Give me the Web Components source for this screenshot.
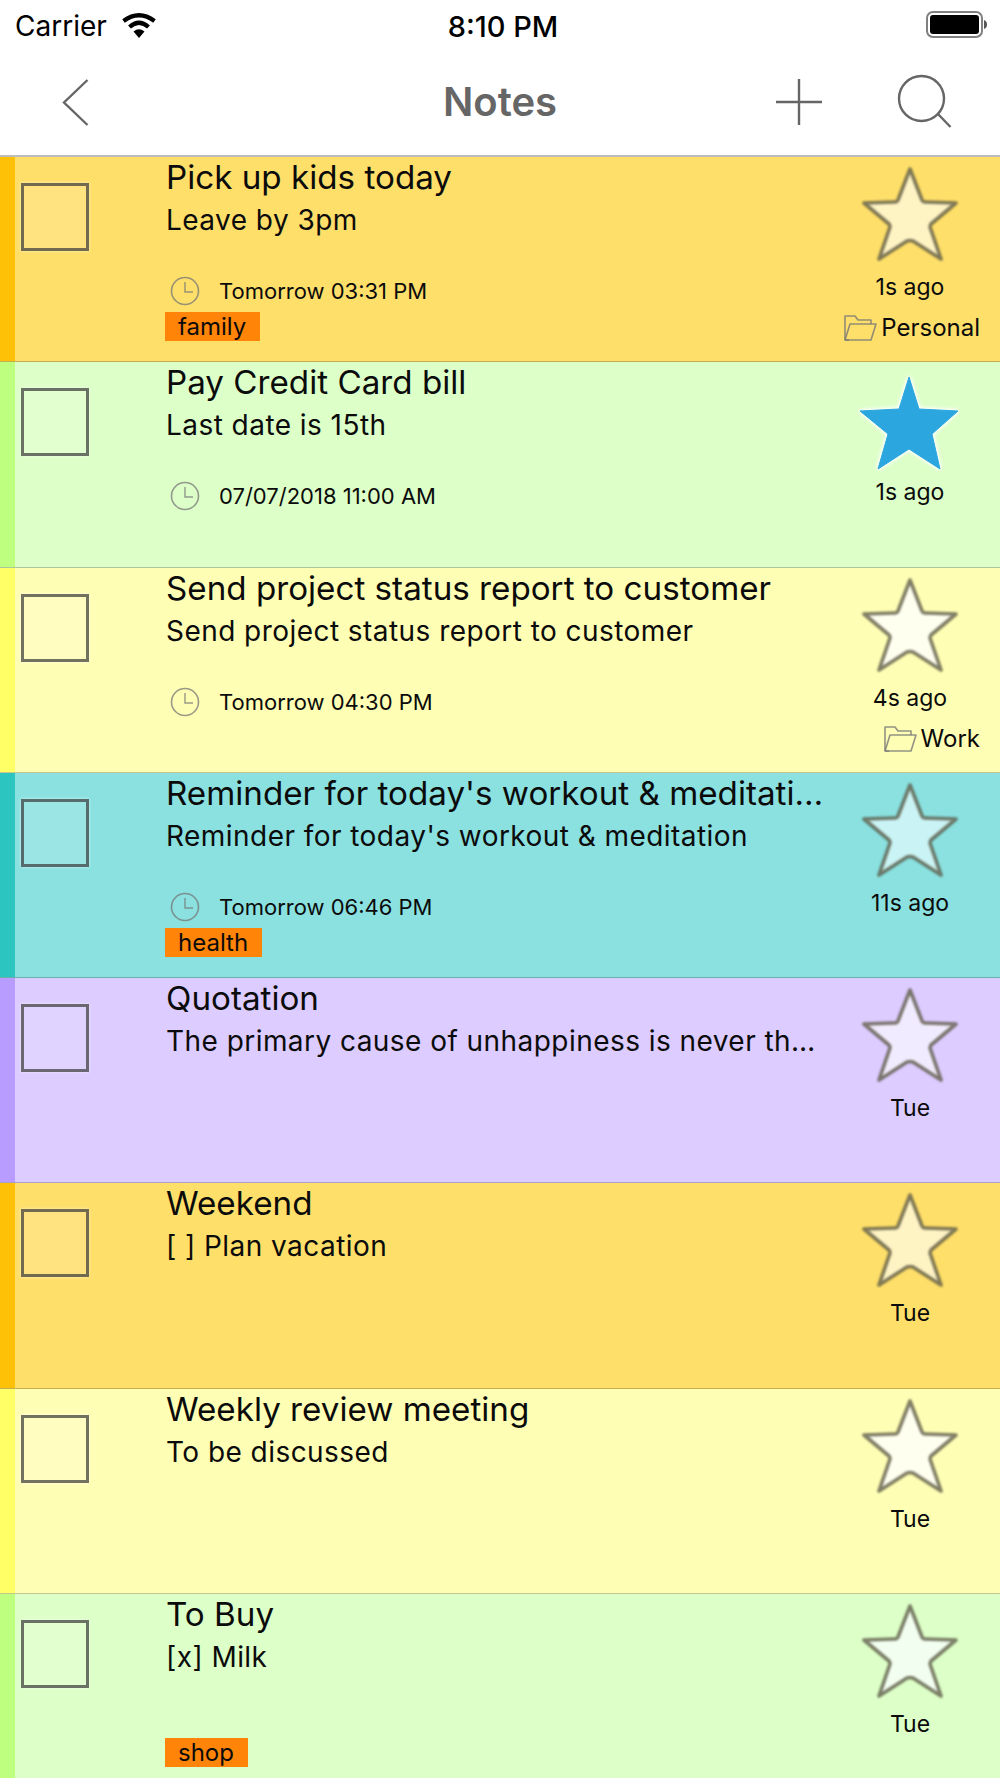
<!DOCTYPE html>
<html>
<head>
<meta charset="utf-8">
<title>Notes</title>
<style>
  html, body { margin: 0; padding: 0; background: #fff; }
  body { width: 1000px; height: 1778px; overflow: hidden; font-family: Inter, "Noto Sans", sans-serif; color: #0b0b0b; }
</style>
</head>
<body>
<status-bar></status-bar>
<nav-bar>Notes</nav-bar>
<note-list>
  <note-row color="orange" ago="1s ago" date="Tomorrow 03:31 PM" tag="family" folder="Personal" title-text="Pick up kids today" desc="Leave by 3pm"></note-row>
  <note-row color="green" ago="1s ago" date="07/07/2018 11:00 AM" starred title-text="Pay Credit Card bill" desc="Last date is 15th"></note-row>
  <note-row color="yellow" ago="4s ago" date="Tomorrow 04:30 PM" folder="Work" title-text="Send project status report to customer" desc="Send project status report to customer"></note-row>
  <note-row color="teal" ago="11s ago" date="Tomorrow 06:46 PM" tag="health" title-text="Reminder for today's workout &amp; meditation" desc="Reminder for today's workout &amp; meditation"></note-row>
  <note-row color="purple" ago="Tue" title-text="Quotation" desc="The primary cause of unhappiness is never the situation but your thoughts about it"></note-row>
  <note-row color="orange" ago="Tue" title-text="Weekend" desc="[ ] Plan vacation"></note-row>
  <note-row color="yellow" ago="Tue" title-text="Weekly review meeting" desc="To be discussed"></note-row>
  <note-row color="green" ago="Tue" tag="shop" title-text="To Buy" desc="[x] Milk"></note-row>
</note-list>

<script>
class StatusBar extends HTMLElement {
    constructor() {
        super();
        this.attachShadow({ mode: 'open' });
        this.shadowRoot.innerHTML = `
        <style>
            :host { display: grid; grid-template-columns: 1fr auto 1fr; align-items: center; height: 52px; padding: 0 12px 0 15px; font-size: 28px; color: #000; }
            .left { display: flex; align-items: center; gap: 14px; }
            .time { font-size: 29px; font-weight: 500; margin-left: 3px; }
            .right { display: flex; justify-content: flex-end; margin-top: -4px; }
        </style>
        <div class="left">
            <span>Carrier</span>
            <svg width="36" height="26" viewBox="0 0 36 26">
                <path d="M18 25 L12.5 18.5 Q18 14 23.5 18.5 Z" fill="#000"/>
                <path d="M8.5 14 Q18 5.5 27.5 14" fill="none" stroke="#000" stroke-width="4.2"/>
                <path d="M2.5 8 Q18 -3.5 33.5 8" fill="none" stroke="#000" stroke-width="4.2"/>
            </svg>
        </div>
        <span class="time">8:10 PM</span>
        <div class="right">
            <svg width="64" height="30" viewBox="0 0 64 30">
                <rect x="3" y="3" width="55" height="25" rx="6" fill="none" stroke="#808080" stroke-width="2"/>
                <rect x="6" y="6" width="49" height="19" rx="3" fill="#000"/>
                <path d="M60 11 Q63 12 63 15.5 Q63 19 60 20 Z" fill="#555"/>
            </svg>
        </div>
        `;
    }
}
customElements.define('status-bar', StatusBar);

class NavBar extends HTMLElement {
    constructor() {
        super();
        this.attachShadow({ mode: 'open' });
        this.shadowRoot.innerHTML = `
        <style>
            :host { display: grid; grid-template-columns: 1fr auto 1fr; align-items: center; height: 105px; box-sizing: border-box; padding-bottom: 4px; border-bottom: 2px solid #bdbdbd; color: #666; }
            .title { font-size: 40px; font-weight: 600; }
            .back { padding-left: 60px; display: flex; }
            .actions { display: flex; justify-content: flex-end; align-items: center; gap: 74px; padding-right: 47px; }
            svg { display: block; }
            path, circle { fill: none; stroke: #666; stroke-width: 2.4; }
        </style>
        <div class="back">
            <svg width="30" height="50" viewBox="0 0 30 50"><path d="M27.5 3 L4 25.5 L27.5 48"/></svg>
        </div>
        <div class="title"><slot></slot></div>
        <div class="actions">
            <svg width="48" height="48" viewBox="0 0 48 48"><path d="M24 1 V47 M1 24 H47"/></svg>
            <svg width="56" height="56" viewBox="0 0 56 56"><circle cx="24.5" cy="24.5" r="22.5"/><path d="M41 40 L53.5 53"/></svg>
        </div>
        `;
    }
}
customElements.define('nav-bar', NavBar);

class NoteList extends HTMLElement {
    constructor() {
        super();
        this.attachShadow({ mode: 'open' });
        this.shadowRoot.innerHTML = `
        <style>
            :host { display: flex; flex-direction: column; }
        </style>
        <slot></slot>
        `;
    }
}
customElements.define('note-list', NoteList);

const NOTE_COLORS = {
    orange: ['#fedf6a', '#ffc107', '#fef3c3'],
    green: ['#ddffc8', '#bfff80', '#f2fff0'],
    yellow: ['#fffeb5', '#ffff66', '#fffff0'],
    teal: ['#8ae1e0', '#2cc5c0', '#c9f3f4'],
    purple: ['#dcccff', '#b99cff', '#f1ebff']
};

const STAR_OUTLINE = 'M52 5 L64 36 Q65 38 67 38 L98 39 L73 60 Q72 62 72 63 L83 95 L55 77 Q52 76 49 77 L21 95 L32 63 Q32 61 31 60 L6 39 L37 38 Q39 38 40 36 Z';
const STAR_FILLED = 'M51 8 L61 40 L100 42 L74 65 L82 100 L51 80 L20 100 L30 65 L2 42 L41 40 Z';

class NoteRow extends HTMLElement {
    constructor() {
        super();
        this.attachShadow({ mode: 'open' });
    }

    connectedCallback() {
        const c = NOTE_COLORS[this.getAttribute('color')];
        const starred = this.hasAttribute('starred');
        const date = this.getAttribute('date');
        const tag = this.getAttribute('tag');
        const folder = this.getAttribute('folder');

        const star = starred
            ? `<path d="${STAR_FILLED}" fill="#2ba6df" stroke="#2ba6df" stroke-width="1" stroke-linejoin="round" style="filter: blur(.5px) drop-shadow(0 0 2px #fff) drop-shadow(0 0 1px #fff)"/>`
            : `<path d="${STAR_OUTLINE}" fill="${c[2]}" stroke="#55533f" stroke-opacity=".75" stroke-width="3.6" stroke-linejoin="round" style="filter: blur(1px)"/>`;

        this.shadowRoot.innerHTML = `
        <style>
            :host { display: flex; height: 205.3px; box-sizing: border-box; position: relative; background: ${c[0]}; border-bottom: 1px solid rgba(0,0,0,.22); overflow: hidden; flex: none; }
            :host::after { content: ""; position: absolute; left: 15px; bottom: -1px; width: 33px; height: 1px; background: rgba(255,255,255,.6); }
            .stripe { width: 15px; flex: none; background: ${c[1]}; }
            .check { width: 151px; flex: none; padding: 26px 0 0 6px; box-sizing: border-box; }
            .box { width: 68px; height: 68px; box-sizing: border-box; border: 3px solid rgba(60,60,60,.72); background: rgba(255,255,255,.15); box-shadow: 0 0 3px rgba(255,255,255,.6); }
            .main { width: 664px; margin-right: -8px; flex: none; min-width: 0; }
            .ttl, .desc { white-space: nowrap; overflow: hidden; text-overflow: ellipsis; }
            .ttl { font-size: 33.2px; line-height: 41px; }
            .desc { width: 654px; font-size: 28px; letter-spacing: .45px; line-height: 33px; margin-top: 6px; }
            .when { display: flex; align-items: center; gap: 19px; height: 32px; margin-top: 38px; padding-left: 4px; font-size: 22px; }
            .when.empty { height: 21px; }
            .tag { display: inline-block; height: 29px; line-height: 29px; margin: 5px 0 0 -1px; padding: 0 14px 0 13px; background: #ff8408; font-size: 24px; }
            .side { flex: 1; display: flex; flex-direction: column; align-items: center; padding: 7px 2px 0 0; min-width: 0; }
            .ago { font-size: 23px; line-height: 28px; margin-top: 9px; }
            .folder { align-self: flex-end; display: flex; align-items: center; gap: 4px; padding-right: 18px; font-size: 24px; line-height: 30px; margin-top: 12px; white-space: nowrap; }
            svg { display: block; flex: none; overflow: visible; }
        </style>
        <div class="stripe"></div>
        <div class="check"><div class="box"></div></div>
        <div class="main">
            <div class="ttl">${this.esc(this.getAttribute('title-text'))}</div>
            <div class="desc">${this.esc(this.getAttribute('desc'))}</div>
            <div class="when ${date ? '' : 'empty'}">${date ? `
                <svg width="30" height="30" viewBox="0 0 30 30"><circle cx="15" cy="15" r="13.5" fill="none" stroke="#777" stroke-opacity=".75" stroke-width="1.6"/><path d="M15 6 V16 H23" fill="none" stroke="#777" stroke-opacity=".75" stroke-width="1.4"/></svg>
                <span>${date}</span>` : ''}
            </div>
            ${tag ? `<span class="tag">${tag}</span>` : ''}
        </div>
        <div class="side">
            <svg width="104" height="100" viewBox="0 0 104 100">${star}</svg>
            <div class="ago">${this.getAttribute('ago')}</div>
            ${folder ? `<div class="folder">
                <svg width="34" height="28" viewBox="0 0 34 28" fill="none" stroke="#777" stroke-opacity=".8" stroke-width="1.6" stroke-linejoin="round"><path d="M6 26 H2 V2 H12 L15 6 H28 V10"/><path d="M2 26 L7 10 H33 L28 26 H2"/></svg>
                <span>${folder}</span></div>` : ''}
        </div>
        `;
    }

    esc(s) {
        return s.replace(/&/g, '&amp;').replace(/</g, '&lt;');
    }
}
customElements.define('note-row', NoteRow);
</script>
</body>
</html>
